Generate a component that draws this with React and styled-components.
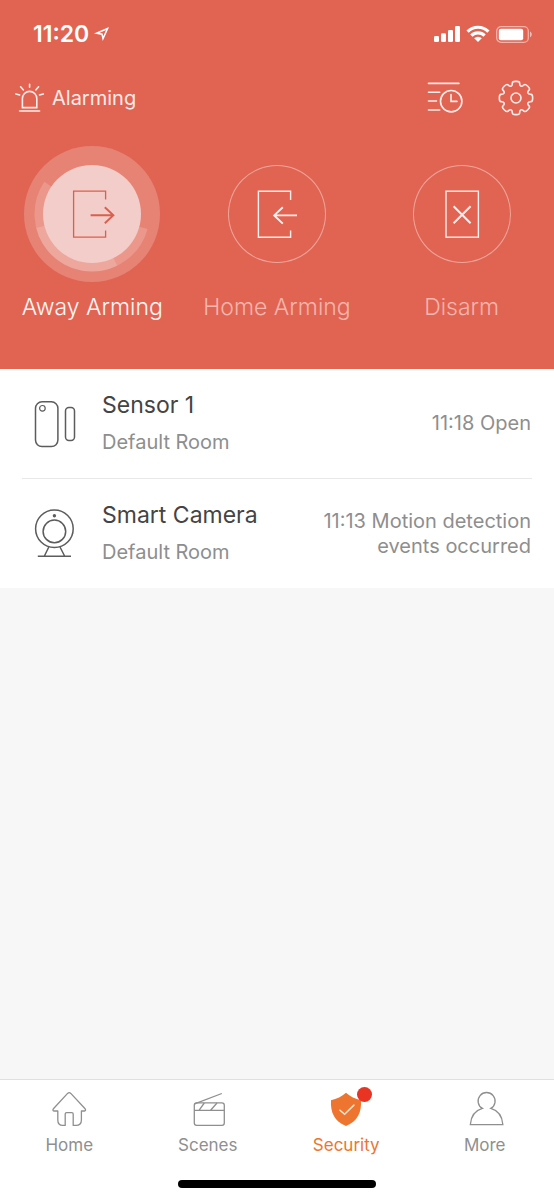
import React, { useState } from 'react'
import styled, { createGlobalStyle } from 'styled-components';

const GlobalStyle = createGlobalStyle`
  * {
    margin: 0;
    padding: 0;
    box-sizing: border-box;
  }
  body {
    font-family: Inter, "Liberation Sans", sans-serif;
    background-color: #f7f7f7;
  }
  button {
    font-family: inherit;
    color: inherit;
    background: none;
    border: none;
    cursor: pointer;
  }
  svg {
    display: block;
    flex-shrink: 0;
    fill: none;
    stroke: currentColor;
    overflow: visible;
  }
`;

// point on a circle, angle in degrees clockwise from the right
const polar = (c, r, deg) => {
  const a = (deg * Math.PI) / 180;
  return [c + r * Math.cos(a), c + r * Math.sin(a)];
};

const gearPath = () => {
  const pts = [];
  for (let i = 0; i < 8; i++) {
    const mid = i * 45;
    pts.push(polar(18, 13, mid - 17), polar(18, 17, mid - 12), polar(18, 17, mid + 12), polar(18, 13, mid + 17));
  }
  // round every corner with a short curve
  return pts.map((p, i) => {
    const prev = pts[(i + pts.length - 1) % pts.length];
    const next = pts[(i + 1) % pts.length];
    const a = [p[0] + (prev[0] - p[0]) * 0.4, p[1] + (prev[1] - p[1]) * 0.4];
    const b = [p[0] + (next[0] - p[0]) * 0.4, p[1] + (next[1] - p[1]) * 0.4];
    return `${i === 0 ? 'M' : 'L'}${a.join(' ')}Q${p.join(' ')} ${b.join(' ')}`;
  }).join('') + 'Z';
};

const arcPath = (r, from, to) =>
  `M${polar(68, r, from).join(' ')}A${r} ${r} 0 0 1 ${polar(68, r, to).join(' ')}`;

const LocationIcon = () => (
  <svg width="16" height="16" strokeWidth="1.5">
    <path d="M2.6 7.3 13.6 2.5 9 12.6 8 8.2Z" />
  </svg>
);

const SignalIcon = () => (
  <svg width="26" height="16">
    <g fill="currentColor" stroke="none">
      <rect x="0" y="10" width="5" height="6" rx="1.3" />
      <rect x="7" y="7.3" width="5" height="8.7" rx="1.3" />
      <rect x="14" y="4" width="5" height="12" rx="1.3" />
      <rect x="21" y="0" width="5" height="16" rx="1.3" />
    </g>
  </svg>
);

const WifiIcon = () => (
  <svg width="24" height="16" strokeWidth="3.2">
    <path d="M1.6 5.6a14.6 14.6 0 0 1 20.8 0" />
    <path d="M5.4 9.6a9.3 9.3 0 0 1 13.2 0" />
    <path d="M12 16 8.2 12.2a5.4 5.4 0 0 1 7.6 0Z" fill="currentColor" stroke="none" />
  </svg>
);

const BatteryIcon = () => (
  <svg width="36" height="17">
    <rect x="0.7" y="0.7" width="31.6" height="15.6" rx="4.4" strokeWidth="1.3" opacity="0.5" />
    <rect x="2.8" y="2.8" width="24.4" height="11.4" rx="2" fill="currentColor" stroke="none" />
    <path d="M34 5.6c2.4 1 2.4 4.8 0 5.8Z" fill="currentColor" stroke="none" opacity="0.55" />
  </svg>
);

const SirenIcon = () => (
  <svg width="30" height="30" strokeWidth="1.6" strokeLinecap="round">
    <path d="M7.4 24.6V15.6a7.2 7.2 0 0 1 14.4 0V24.6Z" />
    <path d="M4.6 28h20M14.6 1.2v3M5.6 3.8l2.8 3.2M23.6 3.8l-2.8 3.2M0.9 10.9l3.8 1M28.3 10.9l-3.8 1" />
  </svg>
);

const LogIcon = () => (
  <svg width="36" height="36" strokeWidth="1.6" strokeLinecap="round">
    <path d="M1.5 3.4h30.4M1.5 12.3h11.2M1.5 21h8M1.5 30h11.2" />
    <circle cx="24.2" cy="21.2" r="10.7" />
    <path d="M24 14.6v6.8h6" />
  </svg>
);

const GearIcon = () => (
  <svg width="36" height="36" strokeWidth="1.6">
    <path d={gearPath()} />
    <circle cx="18" cy="18" r="5" />
  </svg>
);

const AwayIcon = () => (
  <svg width="98" height="98" strokeWidth="1.3">
    <path d="M62.6 34.6V26.2H30.6V72.2H62.6V65.4" />
    <path d="M47.6 50.2h22.4M61.8 42.2l8.6 8-8.6 8" strokeWidth="1.9" />
  </svg>
);

const HomeArmIcon = () => (
  <svg width="98" height="98" strokeWidth="1.4">
    <path d="M62.6 35V26.2H30.4V72.2H62.6V65.4" />
    <path d="M69 50.4H46.4M54.8 42.200l-8.600 8.200 8.600 8.200" strokeWidth="1.9" />
  </svg>
);

const DisarmIcon = () => (
  <svg width="98" height="98" strokeWidth="1.4">
    <rect x="33" y="26.2" width="32.4" height="46" />
    <path d="M40.6 41.2l17 17M57.6 41.2l-17 17" strokeWidth="2" />
  </svg>
);

const SensorIcon = () => (
  <svg width="42" height="48" strokeWidth="1.5">
    <rect x="1.5" y="1.8" width="22.4" height="44.8" rx="6.5" />
    <circle cx="8.4" cy="8.3" r="2.8" strokeWidth="1.2" />
    <rect x="31.5" y="7.5" width="9" height="33" rx="3.4" />
  </svg>
);

const CameraIcon = () => (
  <svg width="42" height="48" strokeWidth="1.5">
    <circle cx="20.4" cy="18.8" r="18.8" />
    <circle cx="20.4" cy="21.4" r="11.3" />
    <circle cx="20.4" cy="5.8" r="1.7" fill="currentColor" stroke="none" />
    <path d="M14.8 37 10.4 46M26 37l4.6 9M3.8 46.2H37" />
  </svg>
);

const HomeIcon = () => (
  <svg width="34" height="34" strokeWidth="1.3" strokeLinejoin="round">
    <path d="M15.6 1.4 1.4 16.8c-.9 1.2-.5 2 .6 2.2H5.8V28c0 3.4 2 5.4 5 5.4H13.2V22c0-.9.5-1.4 1.4-1.4h5.2c.9 0 1.4.5 1.4 1.4V33.4H24c3.4 0 5.4-2 5.4-5.4V19H32.4c1.2-.2 1.5-1 .7-2.2L18.8 1.4c-1.100-1-2.100-1-3.200 0Z" />
  </svg>
);

const ScenesIcon = () => (
  <svg width="34" height="34" strokeWidth="1.3">
    <rect x="3.3" y="10.9" width="30" height="22.5" rx="2.4" />
    <path d="M3.3 18.3H33.3M3.6 11.8 30.8 1.5M13.3 11 8 18.3M26 11l-6.4 7.3" />
  </svg>
);

const ShieldIcon = () => (
  <svg width="34" height="34">
    <path d="M17 .8C13 4.6 7.6 6.9 2 8.2 1.2 20 5.4 29.4 17 34 28.6 29.4 32.8 20 32 8.2 26.4 6.9 21 4.6 17 .8Z" fill="currentColor" stroke="none" />
    <path d="M10.4 17.8l5.200 4.400 9.800-9.600" stroke="#fbe3d2" strokeWidth="1.5" />
  </svg>
);

const MoreIcon = () => (
  <svg width="34" height="34" strokeWidth="1.3">
    <path d="M14.4 16.4a8.5 8.5 0 1 1 8.4 0C29.8 18.400 34.300 24.600 34.900 32.700H2.300C2.900 24.600 7.400 18.400 14.400 16.400Z" />
  </svg>
);

const modes = [
  { id: 'away', label: 'Away Arming', Icon: AwayIcon },
  { id: 'home', label: 'Home Arming', Icon: HomeArmIcon },
  { id: 'disarm', label: 'Disarm', Icon: DisarmIcon },
];

const devices = [
  { id: 1, name: 'Sensor 1', room: 'Default Room', status: '11:18 Open', Icon: SensorIcon },
  { id: 2, name: 'Smart Camera', room: 'Default Room', status: '11:13 Motion detection events occurred', Icon: CameraIcon },
];

const tabs = [
  { id: 'home', label: 'Home', Icon: HomeIcon },
  { id: 'scenes', label: 'Scenes', Icon: ScenesIcon },
  { id: 'security', label: 'Security', Icon: ShieldIcon, badge: true },
  { id: 'more', label: 'More', Icon: MoreIcon },
];

const App = () => {
  const [mode, setMode] = useState('away');
  const [tab, setTab] = useState('security');

  return (
    <Page>
      <GlobalStyle />
      <Header>
        <StatusBar>
          <Time>11:20</Time>
          <LocationIcon />
          <StatusIcons>
            <SignalIcon />
            <WifiIcon />
            <BatteryIcon />
          </StatusIcons>
        </StatusBar>

        <Toolbar>
          <SirenIcon />
          <State>Alarming</State>
          <IconButton aria-label="Log"><LogIcon /></IconButton>
          <IconButton aria-label="Settings"><GearIcon /></IconButton>
        </Toolbar>

        <Modes>
          {modes.map(({ id, label, Icon }) => (
            <ModeButton key={id} $active={mode === id} onClick={() => setMode(id)}>
              <Dial $active={mode === id}>
                {mode === id ? (
                  <Glow>
                    <circle cx="68" cy="68" r="68" fill="#fff" fillOpacity="0.2" stroke="none" />
                    <path d={arcPath(52.5, 15, 166)} />
                    <path d={arcPath(52.5, 64, 214)} />
                  </Glow>
                ) : null}
                <Disc $active={mode === id}><Icon /></Disc>
              </Dial>
              <span>{label}</span>
            </ModeButton>
          ))}
        </Modes>
      </Header>

      <DeviceList>
        {devices.map(({ id, name, room, status, Icon }) => (
          <Device key={id}>
            <Icon />
            <DeviceText>
              <h2>{name}</h2>
              <p>{room}</p>
            </DeviceText>
            <DeviceStatus>{status}</DeviceStatus>
          </Device>
        ))}
      </DeviceList>

      <TabBar>
        <Tabs>
          {tabs.map(({ id, label, Icon, badge }) => (
            <Tab key={id} href={`#${id}`} $active={tab === id} onClick={() => setTab(id)}>
              <TabIcon>
                <Icon />
                {badge ? <Badge /> : null}
              </TabIcon>
              {label}
            </Tab>
          ))}
        </Tabs>
        <HomeIndicator />
      </TabBar>
    </Page>
  )
}

const Page = styled.div`
  min-height: 100vh;
  display: flex;
  flex-direction: column;
`;

const Header = styled.header`
  background-color: #e16453;
  color: #fff;
  padding-bottom: 47px;
`;

const StatusBar = styled.div`
  height: 68px;
  padding: 0 22px 0 33px;
  display: flex;
  align-items: center;
`;

const Time = styled.time`
  font-size: 23px;
  font-weight: 600;
  margin-right: 5px;
`;

const StatusIcons = styled.div`
  display: flex;
  align-items: center;
  gap: 6px;
  margin-left: auto;
`;

const Toolbar = styled.div`
  height: 60px;
  padding: 0 20px 0 15px;
  display: flex;
  align-items: center;
  color: #fcebe8;
`;

const State = styled.h1`
  flex: 1;
  margin-left: 7px;
  font-size: 20px;
  font-weight: 400;
`;

const IconButton = styled.button`
  margin-left: 35px;
`;

const Modes = styled.div`
  display: grid;
  grid-template-columns: repeat(3, 1fr);
  padding-top: 37px;
`;

const ModeButton = styled.button`
  display: flex;
  flex-direction: column;
  align-items: center;
  gap: 29px;
  font-size: 23px;
  font-weight: 300;
  line-height: 30px;
  color: ${({ $active }) => ($active ? '#fff6f5' : '#f3b5ad')};
`;

const Dial = styled.span`
  position: relative;
  color: ${({ $active }) => ($active ? '#d9604f' : '#fdeeec')};
`;

const Glow = styled.svg`
  position: absolute;
  top: -19px;
  left: -19px;
  width: 136px;
  height: 136px;
  stroke: #fff;
  stroke-opacity: 0.16;
  stroke-width: 10px;
`;

const Disc = styled.span`
  position: relative;
  display: block;
  width: 98px;
  height: 98px;
  border-radius: 50%;
  background-color: ${({ $active }) => ($active ? '#f3cdc9' : 'transparent')};
  box-shadow: ${({ $active }) => ($active ? 'none' : 'inset 0 0 0 1px #efa59b')};
`;

const DeviceList = styled.ul`
  flex: 1;
  list-style: none;
`;

const Device = styled.li`
  display: flex;
  align-items: center;
  padding: 22px 23px 22px 34px;
  background-color: #fff;
  color: #5c5c5c;

  & + & {
    border-top: 1px solid transparent;
    background: linear-gradient(#e8e8e8, #e8e8e8) 22px 0 / calc(100% - 44px) 1px no-repeat border-box, #fff;
  }
`;

const DeviceText = styled.div`
  flex: 1;
  margin-left: 26px;

  h2 {
    font-size: 23px;
    font-weight: 400;
    line-height: 28px;
    color: #444;
  }
  p {
    margin-top: 10px;
    font-size: 20px;
    line-height: 27px;
    color: #8e8e8e;
  }
`;

const DeviceStatus = styled.p`
  max-width: 240px;
  font-size: 20px;
  line-height: 25px;
  text-align: right;
  color: #8e8e8e;
`;

const TabBar = styled.nav`
  position: sticky;
  bottom: 0;
  background-color: #fff;
  border-top: 1px solid #e0e0e0;
  padding: 12px 0;
`;

const Tabs = styled.div`
  display: grid;
  grid-template-columns: repeat(4, 1fr);
`;

const Tab = styled.a`
  display: flex;
  flex-direction: column;
  align-items: center;
  gap: 7px;
  font-size: 17px;
  line-height: 24px;
  text-decoration: none;
  color: ${({ $active }) => ($active ? '#ee752f' : '#8f8f8f')};
`;

const TabIcon = styled.span`
  position: relative;
`;

const Badge = styled.span`
  position: absolute;
  top: -5px;
  right: -9px;
  width: 15px;
  height: 15px;
  border-radius: 50%;
  background-color: #e93323;
`;

const HomeIndicator = styled.div`
  width: 198px;
  height: 8px;
  margin: 23px auto 0;
  border-radius: 4px;
  background-color: #000;
`;

export default App
